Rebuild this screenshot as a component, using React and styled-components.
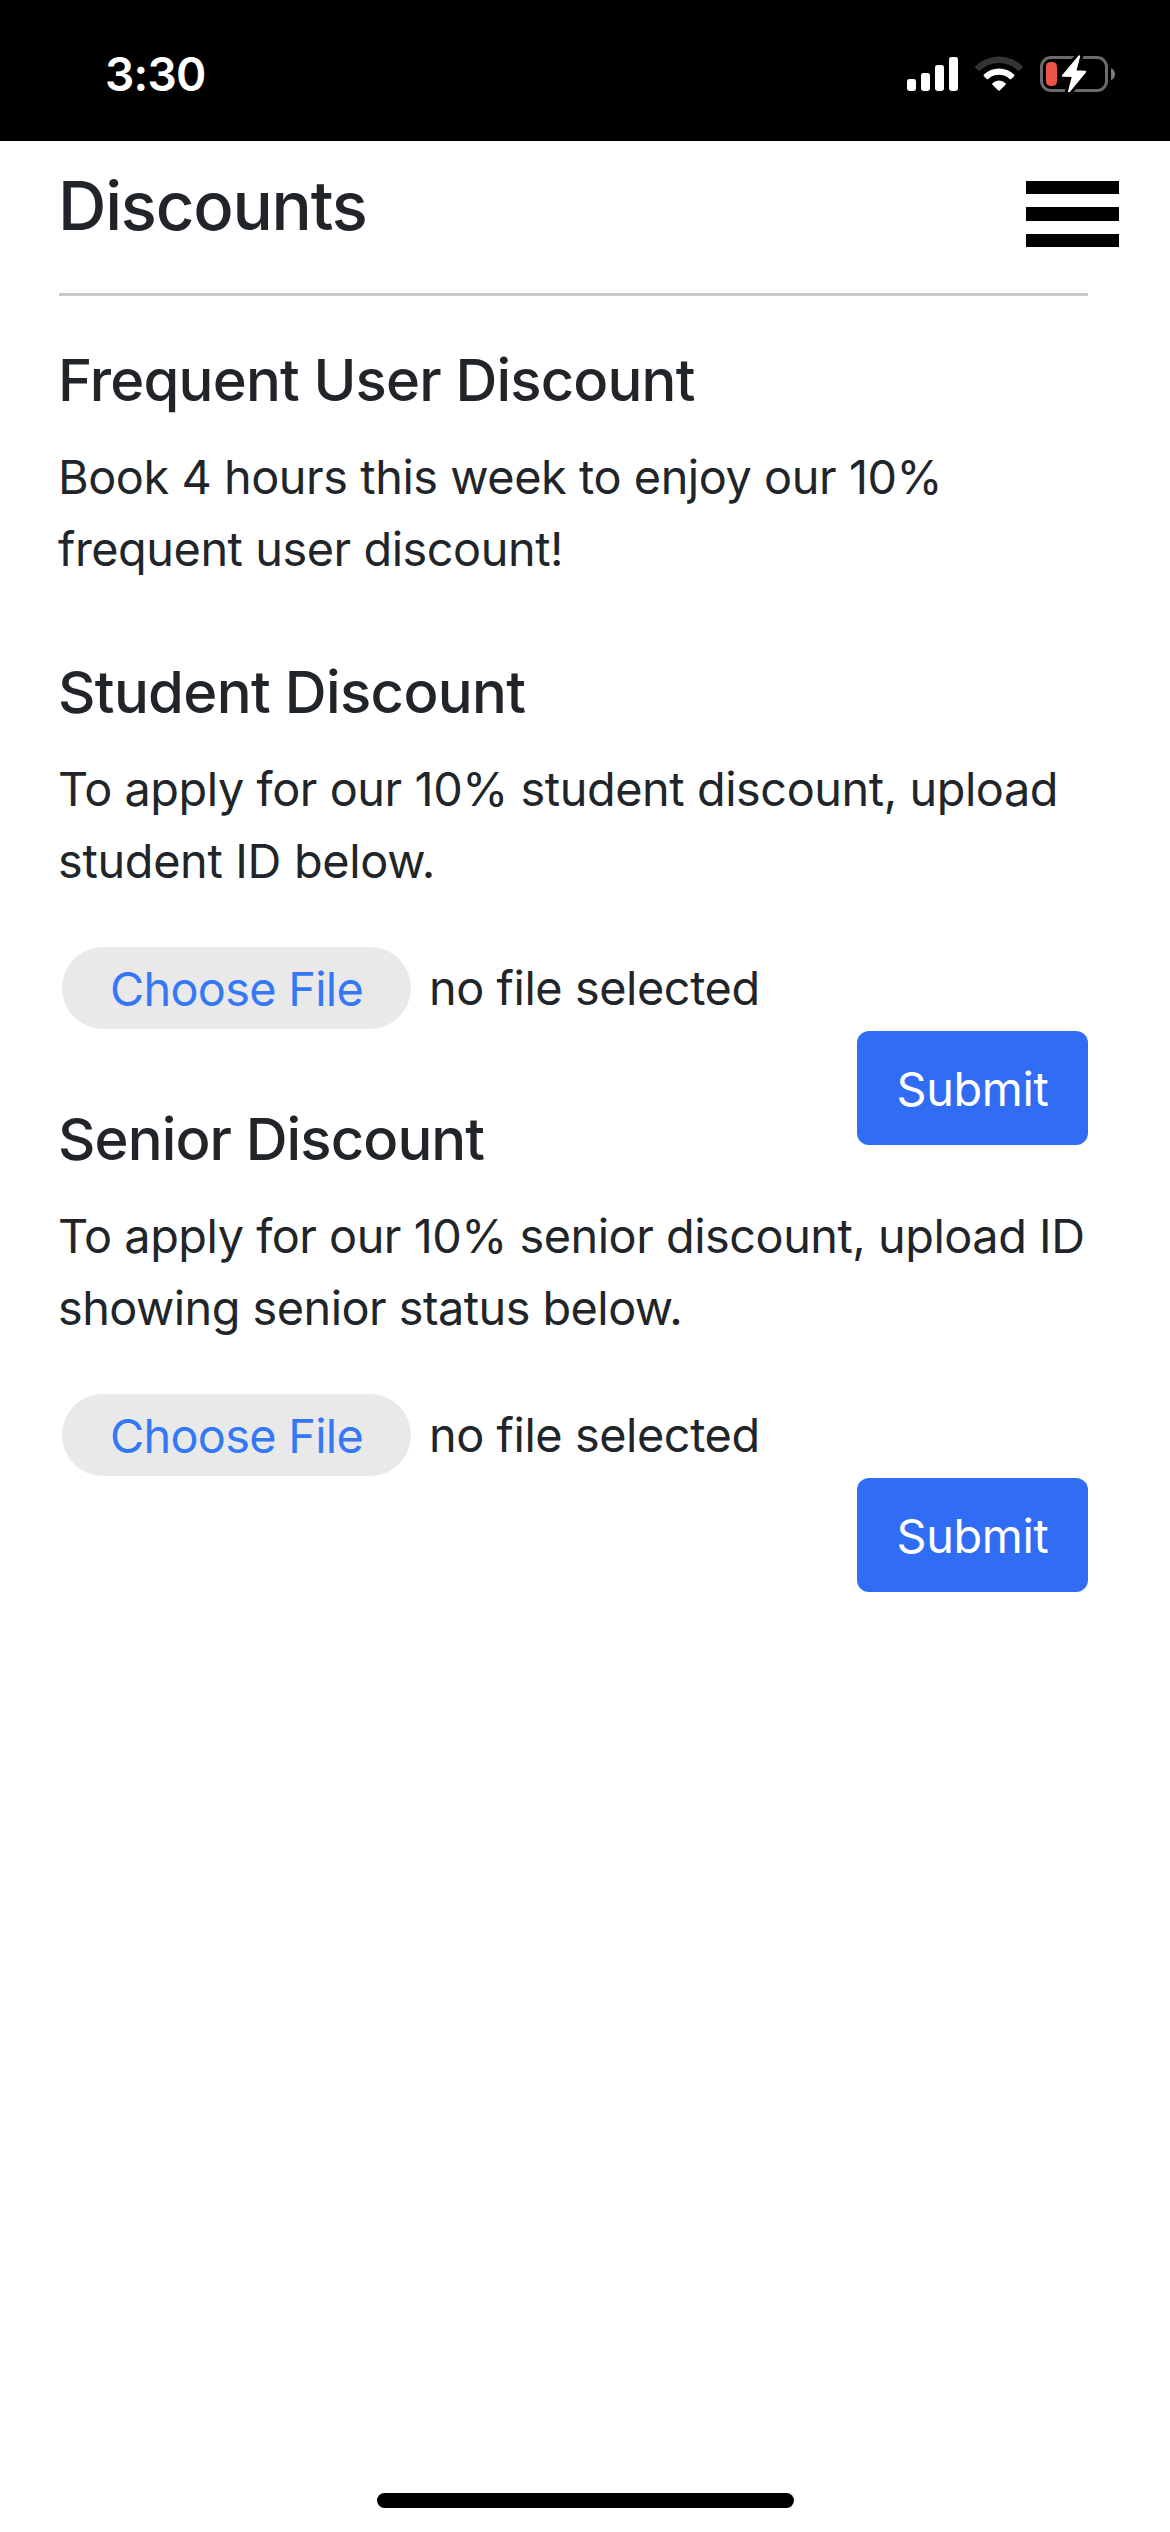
import React from 'react';
import styled, { createGlobalStyle } from 'styled-components';

const GlobalStyle = createGlobalStyle`
  *, *::before, *::after { box-sizing: border-box; }
  body {
    margin: 0;
    background: #ffffff;
    color: #212529;
    font-family: Inter, "Liberation Sans", sans-serif;
  }
  h1, h2, p { margin: 0; }
  button { font-family: inherit; }
`;

const Screen = styled.div`
  display: flex;
  flex-direction: column;
  width: 1170px;
  height: 2532px;
  overflow: hidden;
  background: #ffffff;
`;

const StatusBar = styled.div`
  display: flex;
  flex: none;
  justify-content: space-between;
  align-items: flex-start;
  height: 141px;
  padding: 45px 54px 0 105px;
  background: #000000;
`;

const Clock = styled.time`
  color: #ffffff;
  font-size: 46px;
  font-weight: 600;
  line-height: 58px;
  letter-spacing: -0.73px;
`;

const StatusIcons = styled.svg`
  display: block;
  width: 210px;
  height: 40px;
  margin-top: 8px;
`;

const Header = styled.header`
  display: flex;
  flex: none;
  justify-content: space-between;
  align-items: flex-start;
  padding: 24px 51px 0 58px;
`;

const PageTitle = styled.h1`
  font-size: 67px;
  font-weight: 500;
  line-height: 82px;
  letter-spacing: -1.2px;
`;

const MenuButton = styled.button`
  display: flex;
  flex-direction: column;
  gap: 13px;
  width: 93px;
  margin: 16px 0 0;
  padding: 0;
  border: 0;
  background: none;
`;

const MenuBar = styled.span`
  height: 13.3px;
  background: #000000;
`;

const Divider = styled.hr`
  flex: none;
  height: 3px;
  margin: 46px 82px 0 59px;
  border: 0;
  background: #c8c8c9;
`;

const Content = styled.main`
  display: flex;
  flex-direction: column;
  flex: 1;
  padding: 48px 82px 0 58px;
`;

const Section = styled.section`
  display: flex;
  flex-direction: column;
  margin-bottom: ${({ $after }) => $after}px;
`;

const SectionTitle = styled.h2`
  font-size: 58px;
  font-weight: 500;
  line-height: 72px;
  letter-spacing: ${({ $tracking }) => $tracking}px;
`;

const Description = styled.p`
  display: flex;
  flex-direction: column;
  margin-top: 25px;
  font-size: 46.8px;
  line-height: 72px;
  white-space: nowrap;
`;

const Line = styled.span`
  letter-spacing: ${({ $tracking }) => $tracking}px;
`;

const UploadForm = styled.form`
  display: flex;
  flex-direction: column;
  margin-top: 50px;
`;

const FileField = styled.div`
  display: flex;
  align-items: center;
  gap: 18px;
  height: 82px;
  padding-left: 4px;
`;

const ChooseButton = styled.button`
  width: 349px;
  height: 82px;
  padding: 2px 0 0;
  border: 0;
  border-radius: 41px;
  background: #e9e9ea;
  color: #3478f6;
  font-size: 46.8px;
  letter-spacing: -0.7px;
  white-space: nowrap;
`;

const FileStatus = styled.span`
  font-size: 46.8px;
  line-height: 82px;
  letter-spacing: -0.42px;
`;

const SubmitButton = styled.button`
  align-self: flex-end;
  width: 231px;
  height: 114px;
  margin-top: 2px;
  padding: 2px 0 0;
  border: 0;
  border-radius: 12px;
  background: #316cf4;
  color: #ffffff;
  font-size: 46.8px;
  letter-spacing: -0.33px;
`;

const HomeIndicator = styled.div`
  flex: none;
  align-self: center;
  width: 417px;
  height: 15px;
  margin-bottom: 24px;
  border-radius: 8px;
  background: #000000;
`;

const sections = [
  {
    title: 'Frequent User Discount',
    tracking: -0.83,
    after: 71,
    lines: [
      ['Book 4 hours this week to enjoy our 10%', -0.43],
      ['frequent user discount!', -0.44],
    ],
  },
  {
    title: 'Student Discount',
    tracking: -0.66,
    after: -42,
    upload: true,
    lines: [
      ['To apply for our 10% student discount, upload', -0.42],
      ['student ID below.', -0.3],
    ],
  },
  {
    title: 'Senior Discount',
    tracking: -0.9,
    after: 0,
    upload: true,
    lines: [
      ['To apply for our 10% senior discount, upload ID', -0.47],
      ['showing senior status below.', -0.52],
    ],
  },
];

function StatusGlyphs() {
  return (
    <StatusIcons viewBox="906 53 210 40" aria-hidden="true">
      <g fill="#ffffff">
        <rect x="907" y="79" width="9" height="12" rx="2.4" />
        <rect x="921" y="73" width="9" height="18" rx="2.4" />
        <rect x="935" y="65" width="9" height="26" rx="2.4" />
        <rect x="949" y="57" width="9" height="34" rx="2.4" />
      </g>
      <path
        d="M975.4 66.2 A33.5 33.5 0 0 1 1022.6 66.2 Q1023.4 67 1022.6 67.8 L1019.7 70.6 Q1019 71.3 1018.2 70.6 A28 28 0 0 0 979.8 70.6 Q979 71.3 978.3 70.6 L975.4 67.8 Q974.6 67 975.4 66.2 Z"
        fill="#343434"
      />
      <path
        d="M983.9 74.6 A21.6 21.6 0 0 1 1014.1 74.6 Q1014.9 75.4 1014.1 76.2 L1011.2 79 Q1010.4 79.7 1009.6 79 A15.6 15.6 0 0 0 988.4 79 Q987.6 79.7 986.8 79 L983.9 76.2 Q983.1 75.4 983.9 74.6 Z"
        fill="#ffffff"
      />
      <path
        d="M992.5 83.2 A9.4 9.4 0 0 1 1005.5 83.2 Q1006.3 84 1005.5 84.8 L999.7 90.6 Q999 91.3 998.3 90.6 L992.5 84.8 Q991.7 84 992.5 83.2 Z"
        fill="#ffffff"
      />
      <rect x="1041.5" y="57.5" width="65" height="33" rx="9.5" fill="none" stroke="#6b6b6b" strokeWidth="3" />
      <path d="M1111 68.3 C1116.3 70 1116.3 78.4 1111 80.1 Z" fill="#7b7b7b" />
      <rect x="1046" y="62" width="11" height="24" rx="4.5" fill="#eb5545" />
      <path
        d="M1079.2 56.3 L1062.8 75.8 L1073 76.1 L1069 91.3 L1085.2 71.8 L1075.3 71.2 Z"
        fill="#ffffff"
        stroke="#000000"
        strokeWidth="8"
        strokeLinejoin="round"
      />
      <path
        d="M1079.2 56.3 L1062.8 75.8 L1073 76.1 L1069 91.3 L1085.2 71.8 L1075.3 71.2 Z"
        fill="#ffffff"
        stroke="#ffffff"
        strokeWidth="2"
        strokeLinejoin="round"
      />
    </StatusIcons>
  );
}

function Upload() {
  return (
    <UploadForm onSubmit={(event) => event.preventDefault()}>
      <FileField>
        <ChooseButton type="button">Choose File</ChooseButton>
        <FileStatus>no file selected</FileStatus>
      </FileField>
      <SubmitButton type="submit">Submit</SubmitButton>
    </UploadForm>
  );
}

export default function App() {
  return (
    <>
      <GlobalStyle />
      <Screen>
        <StatusBar>
          <Clock>3:30</Clock>
          <StatusGlyphs />
        </StatusBar>
        <Header>
          <PageTitle>Discounts</PageTitle>
          <MenuButton type="button" aria-label="Menu">
            <MenuBar />
            <MenuBar />
            <MenuBar />
          </MenuButton>
        </Header>
        <Divider />
        <Content>
          {sections.map(({ title, tracking, after, upload, lines }) => (
            <Section key={title} $after={after}>
              <SectionTitle $tracking={tracking}>{title}</SectionTitle>
              <Description>
                {lines.map(([text, spacing]) => (
                  <Line key={text} $tracking={spacing}>{text}</Line>
                ))}
              </Description>
              {upload && <Upload />}
            </Section>
          ))}
        </Content>
        <HomeIndicator />
      </Screen>
    </>
  );
}
